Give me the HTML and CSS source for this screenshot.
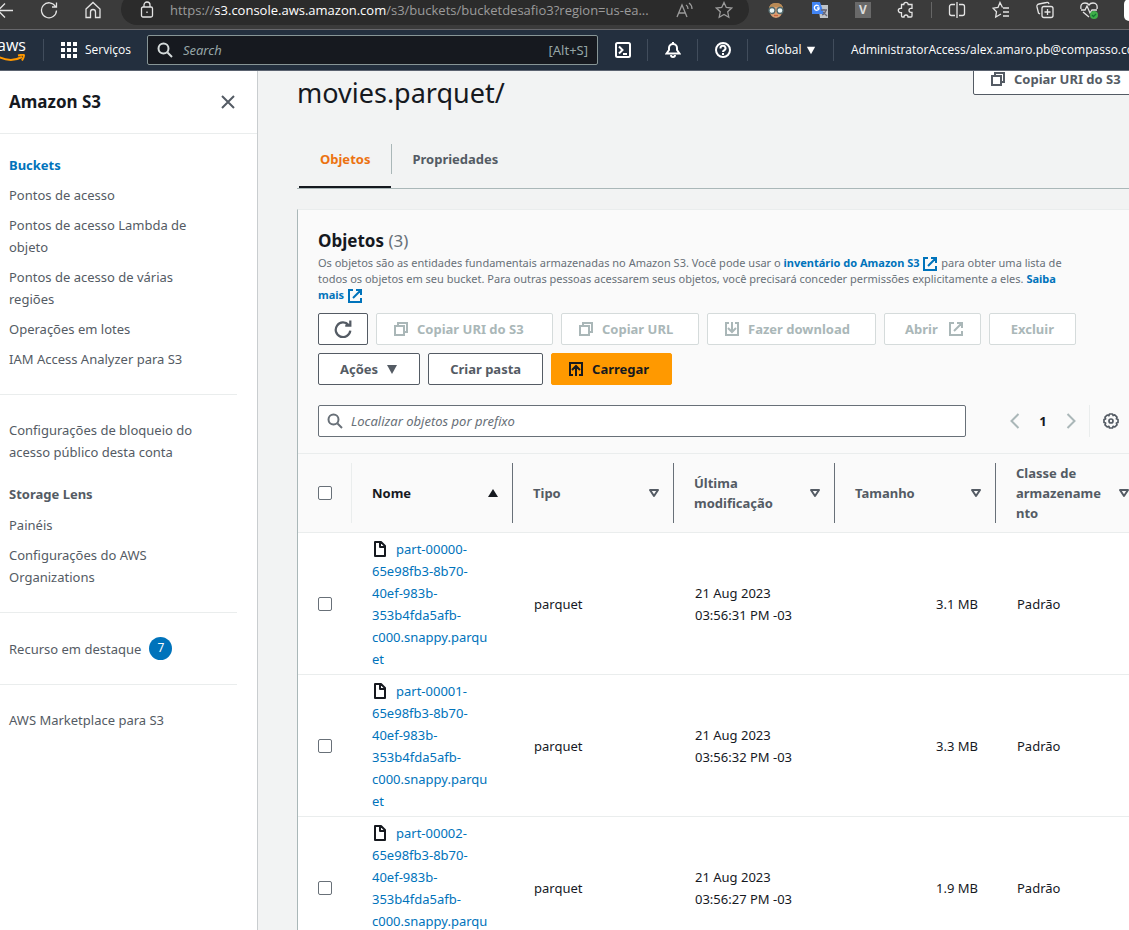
FILE: index.html
```html
<!DOCTYPE html>
<html lang="pt-BR">
<head>
<meta charset="utf-8">
<title>movies.parquet/ - Amazon S3</title>
<link rel="stylesheet" href="styles.css">
</head>
<body>
<svg class="sprite" aria-hidden="true">
  <symbol id="copy" viewBox="0 0 16 16"><path d="M2 5h9v9H2zM5 5V2h9v9h-3" fill="none" stroke="currentColor" stroke-width="2"/></symbol>
  <symbol id="external" viewBox="0 0 16 16"><path d="M6 2H2v12h12v-4M9 2h5v5M14 2L6 10" fill="none" stroke="currentColor" stroke-width="2"/></symbol>
  <symbol id="download" viewBox="0 0 16 16"><path d="M5 2H2v12h12V2h-3M8 1v10M4 7l4 4 4-4" fill="none" stroke="currentColor" stroke-width="2"/></symbol>
  <symbol id="upload" viewBox="0 0 16 16"><path d="M5 14H2V2h12v12h-3M8 15V6M4 9l4-4 4 4" fill="none" stroke="currentColor" stroke-width="2"/></symbol>
  <symbol id="refresh" viewBox="0 0 16 16"><path d="M14.500 9.500A6.500 6.500 0 1 1 13 4.500M10 5h4.500V0.500" fill="none" stroke="currentColor" stroke-width="2"/></symbol>
  <symbol id="search" viewBox="0 0 16 16"><path d="M10.500 10.500L15 15" fill="none" stroke="currentColor" stroke-width="2"/><circle cx="6.500" cy="6.500" r="5" fill="none" stroke="currentColor" stroke-width="2"/></symbol>
  <symbol id="file" viewBox="0 0 16 16"><path d="M3 1h6l4 4v10H3zM8 1v5h5" fill="none" stroke="currentColor" stroke-width="2" stroke-linejoin="round"/></symbol>
  <symbol id="down" viewBox="0 0 12 12"><path d="M1 2h10L6 11z" fill="currentColor"/></symbol>
  <symbol id="sort" viewBox="0 0 12 12"><path d="M2 3h8L6 9z" fill="none" stroke="currentColor" stroke-width="2" stroke-linejoin="round"/></symbol>
  <symbol id="sorted" viewBox="0 0 12 12"><path d="M6 2l5 8H1z" fill="currentColor"/></symbol>
</svg>

<div class="page">
  <div class="browser">
    <button class="b-btn b-back" aria-label="Voltar"><svg class="i18" viewBox="0 0 18 18"><path d="M17 9.500H2M9 2.500l-7 7 7 7"/></svg></button>
    <button class="b-btn" aria-label="Atualizar"><svg class="i18" viewBox="0 0 18 18"><path d="M15.500 5.500a7.500 7.500 0 1 0 1 4M16.500 1.500v4.500H12"/></svg></button>
    <button class="b-btn" aria-label="Início"><svg class="i18" viewBox="0 0 18 18"><path d="M2 8l7-6.500L16 8v8.500h-4.500V11a2.500 2.500 0 0 0-5 0v5.500H2z"/></svg></button>
    <div class="url">
      <svg class="i18" viewBox="0 0 18 18"><rect x="3.500" y="6" width="11" height="10" rx="1.500"/><path d="M6 6V4a3 3 0 0 1 6 0v2M9 10.500v1.500"/></svg>
      <span class="address">https://<b>s3.console.aws.amazon.com</b>/s3/buckets/bucketdesafio3?region=us-ea...</span>
      <svg class="i18 dim" viewBox="0 0 18 18"><path d="M2 16L7 4l5 12M4 12h6M11 4q2 1 2 4M14 2q3 2 3 6"/></svg>
      <svg class="i18 dim star" viewBox="0 0 18 18"><path d="M9 1.500l2.300 5 5.400.600-4 3.700 1.100 5.400L9 13.500l-4.800 2.700 1.100-5.400-4-3.700 5.400-.600z"/></svg>
    </div>
    <div class="exts">
      <svg class="i18" viewBox="0 0 18 18"><path d="M2 9q0-7 7-7t7 7q-1 7-7 8-6-1-7-8z" fill="#d9a074" stroke="none"/><path d="M2 8Q2 2 9 2t7 6q-3-3-7-2-4-1-7 2z" fill="#b98a55" stroke="none"/><circle cx="5" cy="9.500" r="3" fill="#e8f4f5" stroke="#50686c"/><circle cx="13" cy="9.500" r="3" fill="#e8f4f5" stroke="#50686c"/><path d="M7 14.500h4" stroke="#c9623e"/></svg>
      <svg class="i18" viewBox="0 0 18 18"><path d="M7 4h10v13H9z" fill="#bfc3c8" stroke="none"/><path d="M1 1h8l4 12H1z" fill="#4285f4" stroke="none"/><path d="M8 5.500A2.500 2.500 0 1 0 8 8V7H6" stroke="#fff"/><path d="M10 9h6M13 8v1M15 9q-1 4-4 5M12 11l4 4" stroke="#667"/></svg>
      <span class="vbox">V</span>
      <svg class="i18" viewBox="0 0 18 18"><path d="M4.500 3.500h2.300a2.200 2.200 0 0 1 4.400 0H15v3.800h-1a2 2 0 0 0 0 4h1V15a1 1 0 0 1-1 1h-3a2 2 0 0 0-4 0H5.500a1 1 0 0 1-1-1v-3.300h-1a2 2 0 0 1 0-4.400h1z"/></svg>
      <i class="b-line"></i>
      <svg class="i18" viewBox="0 0 18 18"><path d="M7 3.500H3.500A2 2 0 0 0 1.500 5.500v7a2 2 0 0 0 2 2H7M11 3.500h3.500a2 2 0 0 1 2 2v7a2 2 0 0 1-2 2H11M9 1v16"/></svg>
      <svg class="i18" viewBox="0 0 18 18"><path d="M10.500 6.500L8 1.500 6 6.500l-5 .700 3.500 3.500L3.700 16 9 13M11 7h6M11 11h6M11 15h6"/></svg>
      <svg class="i18" viewBox="0 0 18 18"><rect x="6" y="5.500" width="11" height="11" rx="2"/><path d="M11.500 8v6M8.500 11h6M13 3q-.500-2-2.500-1.500L3 3Q.500 3.500 1 6l1.500 6L4 13"/></svg>
      <svg class="i18" viewBox="0 0 18 18"><path d="M1 8q-1-6 4-6 3 0 4 2 1-2 4-2 5 0 4 6M3 11l6 5M1 9h4l2-4 3 7 2-3h5"/><circle cx="14" cy="14" r="4" fill="#3fae49" stroke="none"/><path d="M12 14l1.500 1.500L16 13" stroke="#173"/></svg>
      <span class="avatar"></span>
    </div>
  </div>

  <header class="nav">
    <a class="aws" href="#"><span>aws</span><svg viewBox="0 0 30 9"><path d="M0 1.500q14 8 26 1.500"/><path d="M22 1.500q6-1.500 6 0t-2 5"/></svg></a>
    <i class="sep"></i>
    <button class="services"><svg viewBox="0 0 16 16"><path d="M0 0h4v4H0zM6 0h4v4H6zM12 0h4v4h-4zM0 6h4v4H0zM6 6h4v4H6zM12 6h4v4h-4zM0 12h4v4H0zM6 12h4v4H6zM12 12h4v4h-4z"/></svg>Serviços</button>
    <label class="nav-search"><svg class="i16"><use href="#search"/></svg><input type="text" placeholder="Search" aria-label="Search"><span>[Alt+S]</span></label>
    <button class="n-icon" aria-label="CloudShell"><svg class="i16" viewBox="0 0 16 16"><rect x="1" y="1" width="14" height="14" rx="1.500"/><path d="M4 4.500l3.500 3.500L4 11.500M8 12h4"/></svg></button>
    <i class="sep"></i>
    <button class="n-icon" aria-label="Notificações"><svg class="i16" viewBox="0 0 16 16"><path d="M1.500 11.500h13L12 8V6a4 4 0 0 0-8 0v2zM8 2V0M6 13a2 2 0 0 0 4 0"/></svg></button>
    <i class="sep"></i>
    <button class="n-icon" aria-label="Ajuda"><svg class="i16" viewBox="0 0 16 16"><circle cx="8" cy="8" r="7"/><path d="M5.500 6.500a2.500 2.500 0 1 1 3.500 2q-1 .500-1 1.500M8 11v2"/></svg></button>
    <i class="sep"></i>
    <button class="region">Global <svg class="i10"><use href="#down"/></svg></button>
    <i class="sep"></i>
    <button class="account">AdministratorAccess/alex.amaro.pb@compasso.com</button>
  </header>

  <div class="body">
    <aside class="side">
      <div class="side-head"><h2>Amazon S3</h2><button aria-label="Fechar"><svg viewBox="0 0 16 16"><path d="M2 2l12 12M14 2L2 14"/></svg></button></div>
      <nav class="side-nav">
        <ul>
          <li><a class="on" href="#">Buckets</a></li>
          <li><a href="#">Pontos de acesso</a></li>
          <li><a href="#">Pontos de acesso Lambda de objeto</a></li>
          <li><a href="#">Pontos de acesso de várias regiões</a></li>
          <li><a href="#">Operações em lotes</a></li>
          <li><a href="#">IAM Access Analyzer para S3</a></li>
        </ul>
        <hr>
        <ul><li><a href="#">Configurações de bloqueio do acesso público desta conta</a></li></ul>
        <h3>Storage Lens</h3>
        <ul>
          <li><a href="#">Painéis</a></li>
          <li><a href="#">Configurações do AWS Organizations</a></li>
        </ul>
        <hr>
        <ul><li><a href="#">Recurso em destaque</a><span class="count">7</span></li></ul>
        <hr>
        <ul><li><a href="#">AWS Marketplace para S3</a></li></ul>
      </nav>
    </aside>

    <main class="main">
      <div class="content">
        <div class="title"><h1>movies.parquet/</h1><button class="btn with-icon w-l"><svg class="i16"><use href="#copy"/></svg>Copiar URI do S3</button></div>
        <div class="tabs"><button class="tab active">Objetos</button><button class="tab">Propriedades</button></div>

        <section class="card">
          <div class="card-head">
            <h2>Objetos <span>(3)</span></h2>
            <p>Os objetos são as entidades fundamentais armazenadas no Amazon S3. Você pode usar o <a href="#">inventário do Amazon S3 <svg class="i16"><use href="#external"/></svg></a> para obter uma lista de todos os objetos em seu bucket. Para outras pessoas acessarem seus objetos, você precisará conceder permissões explicitamente a eles. <a href="#">Saiba mais <svg class="i16"><use href="#external"/></svg></a></p>
            <div class="actions">
              <button class="btn icon-only" aria-label="Atualizar"><svg class="i18"><use href="#refresh"/></svg></button>
              <button class="btn with-icon w-l" disabled><svg class="i16"><use href="#copy"/></svg>Copiar URI do S3</button>
              <button class="btn with-icon w-s" disabled><svg class="i16"><use href="#copy"/></svg>Copiar URL</button>
              <button class="btn with-icon w-m" disabled><svg class="i16"><use href="#download"/></svg>Fazer download</button>
              <button class="btn icon-end" disabled>Abrir<svg class="i16"><use href="#external"/></svg></button>
              <button class="btn" disabled>Excluir</button>
              <button class="btn">Ações<svg class="i12"><use href="#down"/></svg></button>
              <button class="btn">Criar pasta</button>
              <button class="btn with-icon primary"><svg class="i16"><use href="#upload"/></svg>Carregar</button>
            </div>
            <div class="tools">
              <label class="find"><svg class="i16"><use href="#search"/></svg><input type="text" placeholder="Localizar objetos por prefixo" aria-label="Localizar objetos por prefixo"></label>
              <div class="pages">
                <button aria-label="Página anterior"><svg class="i16" viewBox="0 0 16 16"><path d="M11.500 1L4.500 8l7 7"/></svg></button>
                <b>1</b>
                <button aria-label="Próxima página"><svg class="i16" viewBox="0 0 16 16"><path d="M4.500 1l7 7-7 7"/></svg></button>
              </div>
              <button class="gear" aria-label="Preferências"><svg class="i16" viewBox="0 0 16 16"><path d="M6.500 1h3l.600 1.500 1.600-.600 2.300 2.300-.600 1.600L15 6.500v3l-1.600.600.600 1.700-2.200 2.200-1.700-.600-.600 1.600h-3l-.600-1.600-1.700.600L2 11.800l.600-1.700L1 9.500v-3l1.600-.600L2 4.200 4.200 2l1.700.600z"/><circle cx="8" cy="8" r="2"/></svg></button>
            </div>
          </div>
          <table>
            <colgroup><col class="c-check"><col class="c-data"><col class="c-data"><col class="c-data"><col class="c-data"><col></colgroup>
            <thead>
              <tr>
                <th><div class="th-check"><input type="checkbox" aria-label="Selecionar todos"></div></th>
                <th><div class="th dark"><span>Nome</span><svg class="i12"><use href="#sorted"/></svg></div></th>
                <th><div class="th"><span>Tipo</span><svg class="i12"><use href="#sort"/></svg></div></th>
                <th><div class="th"><span>Última modificação</span><svg class="i12"><use href="#sort"/></svg></div></th>
                <th><div class="th"><span>Tamanho</span><svg class="i12"><use href="#sort"/></svg></div></th>
                <th><div class="th last"><span>Classe de armazename&#8203;nto</span><svg class="i12"><use href="#sort"/></svg></div></th>
              </tr>
            </thead>
            <tbody>
              <tr>
                <td class="check"><input type="checkbox" aria-label="Selecionar part-00000"></td>
                <td class="name"><svg class="i16"><use href="#file"/></svg><a href="#">part-00000-<br>65e98fb3-8b70-<br>40ef-983b-<br>353b4fda5afb-<br>c000.snappy.parqu<br>et</a></td>
                <td>parquet</td><td>21 Aug 2023<br>03:56:31 PM -03</td><td class="num">3.1 MB</td><td>Padrão</td>
              </tr>
              <tr>
                <td class="check"><input type="checkbox" aria-label="Selecionar part-00001"></td>
                <td class="name"><svg class="i16"><use href="#file"/></svg><a href="#">part-00001-<br>65e98fb3-8b70-<br>40ef-983b-<br>353b4fda5afb-<br>c000.snappy.parqu<br>et</a></td>
                <td>parquet</td><td>21 Aug 2023<br>03:56:32 PM -03</td><td class="num">3.3 MB</td><td>Padrão</td>
              </tr>
              <tr>
                <td class="check"><input type="checkbox" aria-label="Selecionar part-00002"></td>
                <td class="name"><svg class="i16"><use href="#file"/></svg><a href="#">part-00002-<br>65e98fb3-8b70-<br>40ef-983b-<br>353b4fda5afb-<br>c000.snappy.parqu<br>et</a></td>
                <td>parquet</td><td>21 Aug 2023<br>03:56:27 PM -03</td><td class="num">1.9 MB</td><td>Padrão</td>
              </tr>
            </tbody>
          </table>
        </section>
      </div>
    </main>
  </div>
</div>
</body>
</html>
```
FILE: styles.css
```css
* { box-sizing: border-box; }
body { margin: 0; font: 13px/22px "Noto Sans", "Open Sans", sans-serif; color: #16191f; background: #f2f3f3; }
button, input { font: inherit; color: inherit; }
button { border: 0; background: none; padding: 0; display: flex; align-items: center; }
a { color: #0073bb; text-decoration: none; }
h1, h2, h3, p, ul { margin: 0; padding: 0; }
ul { list-style: none; }
svg { flex: none; }
.sprite { display: none; }
.i10 { width: 10px; height: 10px; }
.i12 { width: 12px; height: 12px; }
.i16 { width: 16px; height: 16px; }
.i18 { width: 18px; height: 18px; }
.page { height: 100vh; display: flex; flex-direction: column; overflow: hidden; }

/* Browser bar */
.browser { flex: none; height: 30px; background: #3b3b3b; border-bottom: 1px solid #67676b; display: flex; align-items: flex-start; color: #e4e4e4; overflow: hidden; }
.browser svg { fill: none; stroke: currentColor; stroke-width: 1.3; }
.b-btn { height: 20px; width: 44px; justify-content: center; }
.b-back { width: 31px; justify-content: flex-start; margin-left: -4px; }
.url { flex: 1; min-width: 0; height: 32px; margin: -7px 18px 0 6px; padding: 2px 16px 0 17px; border-radius: 16px; background: #2b2b2b; display: flex; align-items: center; }
.address { flex: 1; padding-left: 14px; font-family: "Open Sans", sans-serif; font-size: 13px; color: #9b9b9b; white-space: nowrap; overflow: hidden; }
.address b { font-weight: 400; color: #fff; }
.dim { color: #9b9b9b; }
.star { margin-left: 22px; }
.exts { height: 20px; display: flex; align-items: center; gap: 26px; }
.vbox { width: 16px; height: 16px; background: #696969; color: #ddd; font-size: 12px; line-height: 16px; text-align: center; font-weight: 700; }
.b-line { width: 1px; height: 16px; background: #666; margin: 0 -10px; }
.avatar { width: 5px; height: 22px; border-radius: 11px 0 0 11px; background: #fff; }

/* Console header */
.nav { flex: none; height: 41px; background: #232f3e; border-bottom: 1px solid #5b6370; display: flex; align-items: center; color: #fff; font-size: 12px; font-family: "Open Sans", sans-serif; font-weight: 500; overflow: hidden; }
.aws { width: 27px; height: 28px; flex: none; display: flex; flex-direction: column; align-items: flex-end; color: #fff; font-size: 16px; line-height: 18px; padding-right: 1px; }
.aws svg { width: 30px; height: 9px; fill: none; stroke: #f90; stroke-width: 2; }
.sep { flex: none; width: 1px; height: 22px; background: #414d5c; }
.aws + .sep { margin-left: 16px; }
.services { margin: 0 16px 0 17px; gap: 8px; }
.services svg { width: 16px; height: 16px; fill: currentColor; }
.nav-search { flex: 1; min-width: 0; height: 30px; border: 1px solid #879596; border-radius: 2px; background: #16191f; padding: 0 9px; display: flex; align-items: center; color: #d5dbdb; font: 400 13px "Noto Sans", sans-serif; }
.nav-search input { flex: 1; min-width: 0; border: 0; background: none; outline: 0; padding: 0 0 0 10px; }
.nav-search span { color: #95a5a6; }
input::placeholder { color: #95a5a6; font-style: italic; opacity: 1; }
.n-icon { width: 49px; flex: none; justify-content: center; }
.n-icon svg { fill: none; stroke: currentColor; stroke-width: 2; }
.region { width: 85px; flex: none; justify-content: center; gap: 4px; }
.account { width: 295px; flex: none; padding-left: 17px; white-space: nowrap; overflow: hidden; }

/* Side navigation */
.body { flex: 1; min-height: 0; display: flex; }
.side { width: 258px; flex: none; background: #fff; border-right: 1px solid #c9cdcf; color: #545b64; overflow: hidden; }
.side-head { height: 63px; border-bottom: 1px solid #eaeded; display: flex; align-items: center; justify-content: space-between; padding: 0 21px 0 9px; }
.side-head h2 { font-size: 17px; color: #16191f; }
.side-head svg { width: 16px; height: 16px; fill: none; stroke: #545b64; stroke-width: 2; }
.side-nav { padding: 20px 20px 0 0; }
.side-nav ul { padding: 0 32px 0 9px; display: grid; gap: 8px; }
.side-nav li { display: flex; align-items: center; gap: 8px; }
.side-nav a { color: #545b64; }
.side-nav a.on { color: #0073bb; font-weight: 700; }
.side-nav hr { border: 0; border-top: 1px solid #eaeded; margin: 24px 0; }
.side-nav h3 { font-size: 13px; margin: 20px 0 9px; padding-left: 9px; }
.count { width: 23px; height: 23px; border-radius: 12px; background: #0073bb; color: #fff; text-align: center; font-size: 12px; }

/* Content */
.main { flex: 1; min-width: 0; padding-left: 39px; overflow: hidden; }
.content { min-width: 853px; }
.title { display: flex; justify-content: space-between; align-items: flex-start; }
.title h1 { font-size: 27px; line-height: 36px; font-weight: 400; padding-top: 4px; }
.title .btn { margin-top: -8px; }
.btn { height: 32px; padding: 0 21px; border: 1px solid #545b64; border-radius: 2px; background: #fff; color: #545b64; font-weight: 700; justify-content: center; gap: 8px; white-space: nowrap; }
.btn.with-icon { padding: 0 22px 0 16px; justify-content: flex-start; }
.btn.icon-end { padding: 0 16px 0 20px; gap: 10px; }
.w-l { min-width: 177px; }
.w-m { min-width: 169px; }
.w-s { min-width: 138px; }
.btn:disabled { color: #aab7b8; border-color: #d5dbdb; }
.btn.primary { background: #f90; border-color: #f90; color: #16191f; }
.btn.icon-only { width: 50px; padding: 0; }
.tabs { display: flex; margin-top: 23px; border-bottom: 1px solid #aab7b8; padding: 10px 0 0 2px; }
.tab { color: #545b64; font-weight: 700; height: 44px; padding: 0 21px 13px; border-bottom: 2px solid transparent; }
.tab.active { color: #ec7211; border-bottom-color: #16191f; }
.tab + .tab { background: linear-gradient(#aab7b8, #aab7b8) 0 0 / 1px 30px no-repeat; }
.card { margin-top: 20px; background: #fff; border-left: 1px solid #aab7b8; border-top: 1px solid #eaeded; }
.card-head { background: #fafafa; padding: 18px 31px 16px 20px; border-bottom: 1px solid #eaeded; }
.card-head h2 { font-size: 17px; line-height: 26px; margin-bottom: 1px; }
.card-head h2 span { font-weight: 400; color: #687078; }
.card-head p { font-size: 11px; line-height: 16px; color: #687078; padding-right: 42px; }
.card-head p a { font-weight: 700; }
.card-head p svg { vertical-align: middle; margin: -3px 0; }
.actions { display: flex; flex-wrap: wrap; gap: 8px; margin: 10px -31px 20px 0; }
.tools { display: flex; align-items: center; }
.find { flex: 1; height: 32px; border: 1px solid #687078; border-radius: 2px; background: #fff; display: flex; align-items: center; padding: 0 8px; color: #687078; }
.find input { flex: 1; border: 0; outline: 0; background: none; padding: 0 0 0 8px; }
.find input::placeholder { color: #687078; }
.pages { display: flex; align-items: center; gap: 16px; margin: 0 10px 0 41px; color: #aab7b8; }
.pages b { color: #16191f; width: 8px; text-align: center; }
.pages svg { fill: none; stroke: currentColor; stroke-width: 2; }
.gear { height: 32px; border-left: 1px solid #eaeded; padding-left: 13px; color: #545b64; }
.gear svg { fill: none; stroke: currentColor; stroke-width: 1.7; stroke-linejoin: round; }

/* Object table */
table { width: 100%; table-layout: fixed; border-collapse: separate; border-spacing: 0; }
.c-check { width: 54px; }
.c-data { width: 161px; }
th { background: #fafafa; border-bottom: 1px solid #eaeded; padding: 9px 0; text-align: left; line-height: 20px; color: #545b64; }
.th { height: 60px; display: flex; align-items: center; justify-content: space-between; padding: 0 13px 0 20px; border-right: 1px solid #687078; }
.th.last { padding-right: 20px; border-right: 0; }
.th span { max-width: 92px; }
.dark { color: #16191f; }
.th-check { height: 60px; display: flex; align-items: center; padding-left: 20px; border-right: 1px solid #eaeded; }
td { height: 142px; border-bottom: 1px solid #eaeded; padding: 5px 18px 4px 21px; vertical-align: middle; }
td.check, td.name { padding-left: 20px; padding-right: 0; }
td.name svg { vertical-align: -3px; margin-right: 8px; }
td.num { text-align: right; }
input[type="checkbox"] { appearance: none; display: block; width: 14px; height: 14px; margin: 0; border: 1px solid #687078; border-radius: 2px; background: #fff; }
```
